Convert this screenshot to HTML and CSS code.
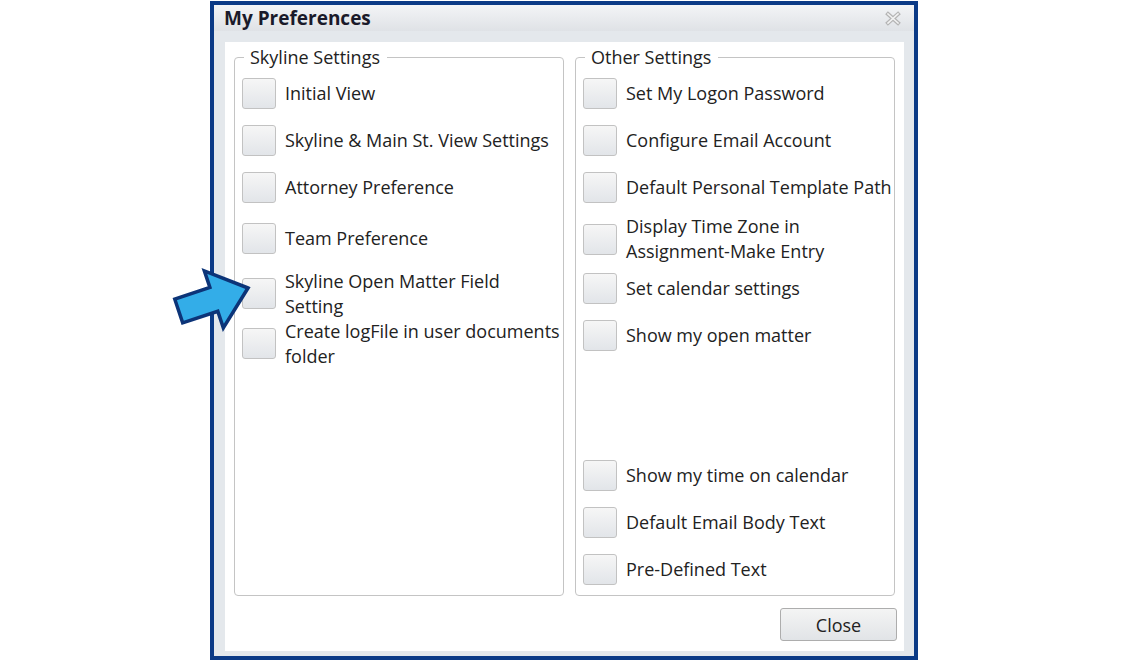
FILE: index.html
```html
<!DOCTYPE html>
<html lang="en">
<head>
  <meta charset="UTF-8">
  <meta name="viewport" content="width=device-width, initial-scale=1.0">
  <title>My Preferences</title>
  <link rel="stylesheet" href="styles.css">
</head>
<body>
<div class="dialog">
  <div class="titlebar">
    <span class="title">My Preferences</span>
    <svg class="close-x" width="18" height="15" viewBox="0 0 18 15">
      <path d="M4 3 L14 12 M14 3 L4 12" stroke="#b4b4b4" stroke-width="4" stroke-linecap="square"/>
      <path d="M4 3 L14 12 M14 3 L4 12" stroke="#f2f2f2" stroke-width="1.6" stroke-linecap="square"/>
    </svg>
  </div>
  <div class="frame">
    <div class="content">
      <div class="groups">
        <fieldset class="group group-left">
          <legend>Skyline Settings</legend>
          <div class="rows">
            <label class="row"><span class="box"></span><span class="text">Initial View</span></label>
            <label class="row"><span class="box"></span><span class="text">Skyline &amp; Main St. View Settings</span></label>
            <label class="row"><span class="box"></span><span class="text">Attorney Preference</span></label>
            <label class="row"><span class="box"></span><span class="text">Team Preference</span></label>
            <label class="row"><span class="box"></span><span class="text">Skyline Open Matter Field<br>Setting</span></label>
            <label class="row"><span class="box"></span><span class="text">Create logFile in user documents<br>folder</span></label>
          </div>
        </fieldset>
        <fieldset class="group group-right">
          <legend>Other Settings</legend>
          <div class="rows">
            <label class="row"><span class="box"></span><span class="text">Set My Logon Password</span></label>
            <label class="row"><span class="box"></span><span class="text">Configure Email Account</span></label>
            <label class="row"><span class="box"></span><span class="text">Default Personal Template Path</span></label>
            <label class="row"><span class="box"></span><span class="text">Display Time Zone in<br>Assignment-Make Entry</span></label>
            <label class="row"><span class="box"></span><span class="text">Set calendar settings</span></label>
            <label class="row"><span class="box"></span><span class="text">Show my open matter</span></label>
            <div class="spacer"></div>
            <label class="row"><span class="box"></span><span class="text">Show my time on calendar</span></label>
            <label class="row"><span class="box"></span><span class="text">Default Email Body Text</span></label>
            <label class="row"><span class="box"></span><span class="text">Pre-Defined Text</span></label>
          </div>
        </fieldset>
      </div>
      <div class="actions">
        <button type="button" class="btn">Close</button>
      </div>
    </div>
  </div>
</div>

<!-- callout arrow pointing at the "Skyline Open Matter Field Setting" box -->
<svg class="callout" width="100" height="80" viewBox="160 260 100 80">
  <polygon points="0,0 -36,-30 -36,-12.5 -73,-12.5 -73,12.5 -36,12.5 -36,30"
           transform="translate(248 288) rotate(-18.4)"
           fill="#33ade8" stroke="#0c3478" stroke-width="3.5" stroke-linejoin="miter"/>
</svg>
</body>
</html>
```

FILE: styles.css
```css
body {
  margin: 0;
  background-color: #fff;
  color: #222;
  font-family: "Open Sans", "Noto Sans", sans-serif;
  font-size: 18px;
}
.dialog {
  box-sizing: border-box;
  width: 708px;
  height: 659px;
  margin: 1px 0 0 210px;
  border: 4px solid #0b3a86;
  background-color: #e4e8ec;
  display: flex;
  flex-direction: column;
}
.titlebar {
  height: 26px;
  padding: 0 12px 0 10px;
  display: flex;
  align-items: center;
  justify-content: space-between;
  background: linear-gradient(#f3f4f6, #dfe2e6);
}
.title {
  font-weight: bold;
  font-size: 19px;
  color: #1a1a2a;
}
.frame {
  flex: 1;
  display: flex;
  padding: 11px 10px 5px 11px;
}
.content {
  flex: 1;
  min-width: 0;
  display: flex;
  flex-direction: column;
  background-color: #fff;
  padding: 3px 9px 10px 9px;
}
.groups {
  flex: 1;
  display: flex;
  gap: 11px;
}
.group {
  box-sizing: border-box;
  margin: 0;
  min-width: 0;
  padding: 0 7px 2px 7px;
  border: 1px solid #c4c4c4;
  border-radius: 4px;
  display: flex;
  flex-direction: column;
}
.group-left {
  width: 330px;
}
.group-right {
  width: 320px;
}
.group legend {
  padding: 0 7px 0 6px;
  margin-left: 2px;
  line-height: 25px;
}
.rows {
  flex: 1;
  min-width: 0;
  display: grid;
}
.group-left .rows {
  grid-template-rows: 47px 47px 47px 55px 55px 45px 1fr;
}
.group-right .rows {
  grid-template-rows: 47px 47px 47px 56px 43px 51px 1fr 47px 47px 47px;
}
.row {
  display: flex;
  align-items: center;
  gap: 9px;
  min-width: 0;
}
.text {
  line-height: 25px;
  white-space: nowrap;
}
.box {
  box-sizing: border-box;
  flex: none;
  width: 34px;
  height: 31px;
  border: 1px solid #c2c2c2;
  border-radius: 3px;
  background: linear-gradient(#f6f6f6, #e2e5e9);
}
.actions {
  display: flex;
  justify-content: flex-end;
  margin-top: 12px;
  margin-right: -2px;
}
.btn {
  width: 117px;
  height: 33px;
  font-family: inherit;
  font-size: 18px;
  color: #222;
  border: 1px solid #adadad;
  border-radius: 3px;
  background: linear-gradient(#f4f4f4, #e1e4e7);
}
/* New styles for the callout arrow */
.callout {
  position: absolute;
  left: 160px;
  top: 260px;
}
```
